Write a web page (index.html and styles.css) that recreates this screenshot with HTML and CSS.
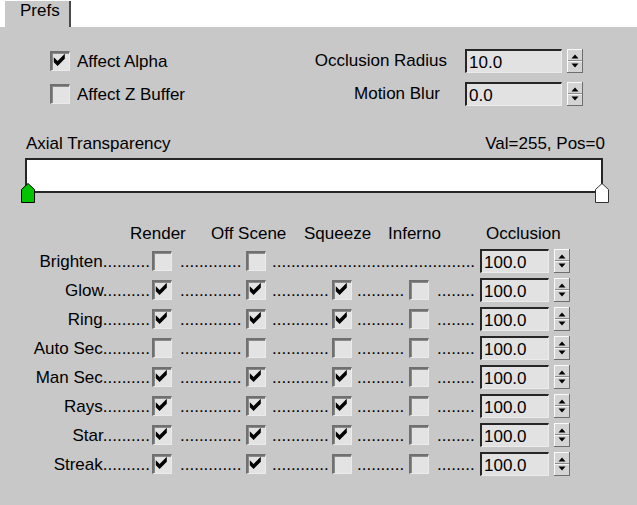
FILE: index.html
```html
<!DOCTYPE html>
<html>
<head>
<meta charset="utf-8">
<title>Prefs</title>
<link rel="stylesheet" href="styles.css">
</head>
<body>
<svg class="defs" aria-hidden="true">
  <symbol id="chk" viewBox="0 0 17 17">
    <polygon points="1.8,4.2 5.6,8 12.8,0.8 12.8,5.8 5.6,13 1.8,9.2" fill="#000"/>
  </symbol>
  <symbol id="spin" viewBox="0 0 16 24">
    <rect width="16" height="24" fill="#d4d4d4"/>
    <path d="M0 .5H15M.5 0V23" stroke="#fafafa" fill="none"/>
    <path d="M0 23.5H16M15.5 0V24" stroke="#6e6e6e" fill="none"/>
    <path d="M1 11.5H15" stroke="#8c8c8c" fill="none"/>
    <path d="M1 12.5H15" stroke="#f4f4f4" fill="none"/>
    <path d="M4.5 9.5L8 5.5 11.5 9.5Z" fill="#000"/>
    <path d="M4.5 14.5H11.5L8 18.5Z" fill="#000"/>
  </symbol>
</svg>

<div class="tabstrip"><div class="tab">Prefs</div></div>

<div class="panel">
  <div class="top">
    <div class="checks">
      <div class="chk"><span class="cb"><svg><use href="#chk"/></svg></span><span class="lbl">Affect Alpha</span></div>
      <div class="chk"><span class="cb"></span><span class="lbl">Affect Z Buffer</span></div>
    </div>
    <div class="params">
      <span class="plabel">Occlusion Radius</span>
      <div class="spinner"><span class="field wide">10.0</span><svg class="sp"><use href="#spin"/></svg></div>
      <span class="plabel mb">Motion Blur</span>
      <div class="spinner"><span class="field wide">0.0</span><svg class="sp"><use href="#spin"/></svg></div>
    </div>
  </div>

  <div class="axial">
    <div class="axhead"><span>Axial Transparency</span><span>Val=255, Pos=0</span></div>
    <div class="bar">
      <svg class="mk mk-l" viewBox="0 0 14 20"><polygon points="0.5,19.5 0.5,6.5 7,0.5 13.5,6.5 13.5,19.5" fill="#00c400" stroke="#000"/></svg>
      <svg class="mk mk-r" viewBox="0 0 14 20"><polygon points="0.5,19.5 0.5,6.5 7,0.5 13.5,6.5 13.5,19.5" fill="#fff" stroke="#333"/></svg>
    </div>
  </div>

  <div class="thead">
    <span class="h1">Render</span><span class="h2">Off Scene</span><span class="h3">Squeeze</span><span class="h4">Inferno</span><span>Occlusion</span>
  </div>

  <div class="rows">
    <div class="row">
      <span class="rl">Brighten..........</span>
      <span class="cb"></span>
      <span class="d d1">.............</span>
      <span class="cb"></span>
      <span class="d dl">...........................................</span>
      <div class="spinner"><span class="field sm">100.0</span><svg class="sp"><use href="#spin"/></svg></div>
    </div>
    <div class="row">
      <span class="rl">Glow..........</span>
      <span class="cb"><svg><use href="#chk"/></svg></span>
      <span class="d d1">.............</span>
      <span class="cb"><svg><use href="#chk"/></svg></span>
      <span class="d d2">............</span>
      <span class="cb"><svg><use href="#chk"/></svg></span>
      <span class="d d3">..........</span>
      <span class="cb"></span>
      <span class="d d4">........</span>
      <div class="spinner"><span class="field sm">100.0</span><svg class="sp"><use href="#spin"/></svg></div>
    </div>
    <div class="row">
      <span class="rl">Ring..........</span>
      <span class="cb"><svg><use href="#chk"/></svg></span>
      <span class="d d1">.............</span>
      <span class="cb"><svg><use href="#chk"/></svg></span>
      <span class="d d2">............</span>
      <span class="cb"><svg><use href="#chk"/></svg></span>
      <span class="d d3">..........</span>
      <span class="cb"></span>
      <span class="d d4">........</span>
      <div class="spinner"><span class="field sm">100.0</span><svg class="sp"><use href="#spin"/></svg></div>
    </div>
    <div class="row">
      <span class="rl">Auto Sec..........</span>
      <span class="cb"></span>
      <span class="d d1">.............</span>
      <span class="cb"></span>
      <span class="d d2">............</span>
      <span class="cb"></span>
      <span class="d d3">..........</span>
      <span class="cb"></span>
      <span class="d d4">........</span>
      <div class="spinner"><span class="field sm">100.0</span><svg class="sp"><use href="#spin"/></svg></div>
    </div>
    <div class="row">
      <span class="rl">Man Sec..........</span>
      <span class="cb"><svg><use href="#chk"/></svg></span>
      <span class="d d1">.............</span>
      <span class="cb"><svg><use href="#chk"/></svg></span>
      <span class="d d2">............</span>
      <span class="cb"><svg><use href="#chk"/></svg></span>
      <span class="d d3">..........</span>
      <span class="cb"></span>
      <span class="d d4">........</span>
      <div class="spinner"><span class="field sm">100.0</span><svg class="sp"><use href="#spin"/></svg></div>
    </div>
    <div class="row">
      <span class="rl">Rays..........</span>
      <span class="cb"><svg><use href="#chk"/></svg></span>
      <span class="d d1">.............</span>
      <span class="cb"><svg><use href="#chk"/></svg></span>
      <span class="d d2">............</span>
      <span class="cb"><svg><use href="#chk"/></svg></span>
      <span class="d d3">..........</span>
      <span class="cb"></span>
      <span class="d d4">........</span>
      <div class="spinner"><span class="field sm">100.0</span><svg class="sp"><use href="#spin"/></svg></div>
    </div>
    <div class="row">
      <span class="rl">Star..........</span>
      <span class="cb"><svg><use href="#chk"/></svg></span>
      <span class="d d1">.............</span>
      <span class="cb"><svg><use href="#chk"/></svg></span>
      <span class="d d2">............</span>
      <span class="cb"><svg><use href="#chk"/></svg></span>
      <span class="d d3">..........</span>
      <span class="cb"></span>
      <span class="d d4">........</span>
      <div class="spinner"><span class="field sm">100.0</span><svg class="sp"><use href="#spin"/></svg></div>
    </div>
    <div class="row">
      <span class="rl">Streak..........</span>
      <span class="cb"><svg><use href="#chk"/></svg></span>
      <span class="d d1">.............</span>
      <span class="cb"><svg><use href="#chk"/></svg></span>
      <span class="d d2">............</span>
      <span class="cb"></span>
      <span class="d d3">..........</span>
      <span class="cb"></span>
      <span class="d d4">........</span>
      <div class="spinner"><span class="field sm">100.0</span><svg class="sp"><use href="#spin"/></svg></div>
    </div>
  </div>
</div>
</body>
</html>
```
FILE: styles.css
```css
* { box-sizing: border-box; }

body {
  margin: 0;
  background: #c8c8c8;
  font-family: "Liberation Sans", Arial, sans-serif;
  font-size: 17px;
  line-height: 20px;
  color: #000;
}

.defs { position: absolute; width: 0; height: 0; overflow: hidden; }

.tabstrip {
  background: #fff;
  height: 27px;
  padding: 1px 0 0 5px;
}
.tab {
  width: 66px;
  height: 26px;
  background: #c8c8c8;
  padding-left: 15px;
  border-right: 2px solid #4a4a4a;
}

.top {
  display: flex;
  justify-content: space-between;
  padding: 22px 54px 0 50px;
}
.checks {
  display: grid;
  grid-auto-rows: 24px;
  row-gap: 9px;
  align-items: center;
}
.chk { display: flex; align-items: center; gap: 7px; }
.chk .lbl { padding-top: 2px; }

.params {
  display: grid;
  grid-template-columns: auto auto;
  grid-auto-rows: 24px;
  column-gap: 18px;
  row-gap: 9px;
  align-items: center;
}
.plabel { justify-self: end; }
.plabel.mb { padding-right: 7px; }

.spinner { display: flex; gap: 5px; }
.field {
  display: block;
  height: 24px;
  background: #e2e2e2;
  border-style: solid;
  border-width: 2px 1px 1px 2px;
  border-color: #262626 #ececec #ececec #262626;
  padding: 2px 0 0 2px;
  line-height: 20px;
}
.field.wide { width: 97px; }
.field.sm { width: 69px; }
.sp { display: block; width: 16px; height: 24px; }

.cb {
  display: block;
  width: 20px;
  height: 20px;
  background: #e3e3e3;
  border-style: solid;
  border-width: 2px 1px 1px 2px;
  border-color: #707070 #ebebeb #ebebeb #707070;
  box-shadow: inset 1px 1px 0 #8a8a8a;
}
.cb svg { display: block; width: 17px; height: 17px; }

.axial { margin-top: 28px; }
.axhead {
  display: flex;
  justify-content: space-between;
  padding: 0 32px 0 26px;
}
.bar {
  position: relative;
  height: 35px;
  margin: 4px 34px 0 25px;
  background: #fff;
  border: 2px solid #262626;
}
.mk { position: absolute; top: 23px; width: 14px; height: 20px; }
.mk-l { left: -6px; }
.mk-r { right: -8px; }

.thead {
  display: flex;
  margin-top: 31px;
  padding-left: 130px;
}
.h1 { width: 81px; }
.h2 { width: 93px; }
.h3 { width: 84px; }
.h4 { width: 98px; }

.rows { margin-top: 2px; }
.row {
  display: grid;
  grid-template-columns: 152px 20px 74px 20px 66px 20px 57px 20px 51px auto;
  height: 29px;
  align-items: center;
}
.rl {
  text-align: right;
  padding-right: 2px;
  margin-top: 3px;
  white-space: nowrap;
}
.d { margin-top: 3px; white-space: nowrap; }
.d1 { margin-left: 8px; }
.d2 { margin-left: 6px; }
.d3 { margin-left: 5px; }
.d4 { margin-left: 8px; }
.dl { grid-column: 5 / 10; margin-left: 6px; }
```
